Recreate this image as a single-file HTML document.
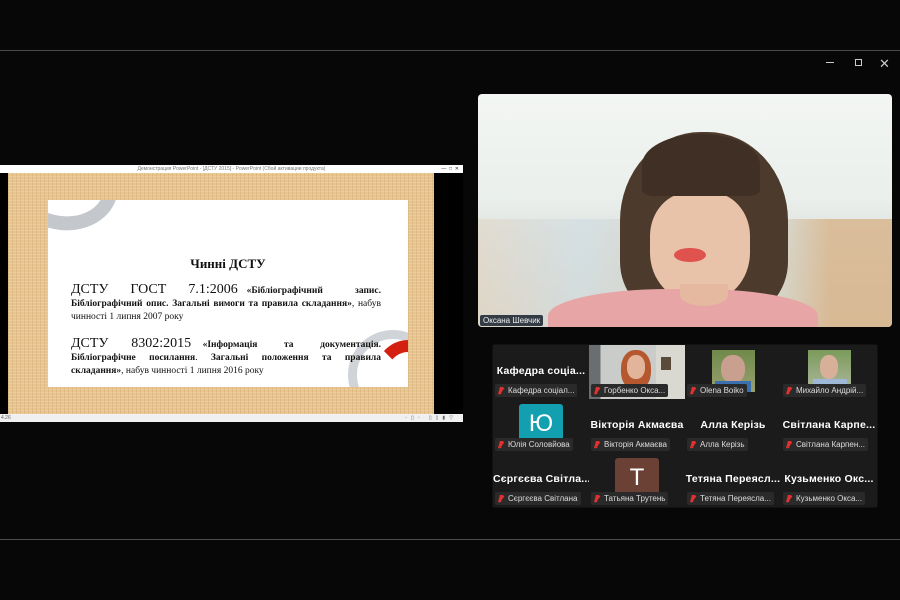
<!DOCTYPE html>
<html><head><meta charset="utf-8"><style>
*{margin:0;padding:0;box-sizing:border-box}
body{width:900px;height:600px;background:#070707;position:relative;overflow:hidden;font-family:"Liberation Sans",sans-serif}
.ab{position:absolute}
.line{position:absolute;left:0;width:900px;height:1px;background:#4a4a4a}
.ser{font-family:"Liberation Serif",serif;color:#111}
.tile{position:absolute;width:96px;height:54px;background:#1b1b1b}
.nm{position:absolute;left:0;right:0;top:20px;text-align:center;color:#fff;font-weight:bold;font-size:10.5px;white-space:nowrap;letter-spacing:.2px}
.chip{position:absolute;left:2px;bottom:2px;height:13px;background:#2a2a2a;border-radius:2px;color:#ddd;font-size:8px;line-height:13px;padding:0 3px 0 13px;white-space:nowrap}
.chip:before{content:"";position:absolute;left:4px;top:3px;width:3px;height:7px;background:#e03030;transform:skewX(-15deg)}
.chip:after{content:"";position:absolute;left:2px;top:6px;width:8px;height:1.5px;background:#e03030;transform:rotate(-55deg)}
</style></head><body>
<div class="line" style="top:50px"></div>
<div class="line" style="top:539px"></div>
<div class="ab" style="left:826px;top:62px;width:8px;height:1px;background:#ccc"></div>
<div class="ab" style="left:855px;top:59px;width:7px;height:7px;border:1px solid #ccc"></div>
<div class="ab" style="left:879px;top:56px;color:#ccc;font-size:13px">✕</div>

<!-- PowerPoint window -->
<div class="ab" style="left:0;top:165px;width:463px;height:257px;background:#000"></div>
<div class="ab" style="left:0;top:165px;width:463px;height:8px;background:#fff;font-size:5px;color:#777;text-align:center;line-height:8px">Демонстрация PowerPoint - [ДСТУ 2015] - PowerPoint (Сбой активации продукта)<span style="position:absolute;right:4px;color:#333">— &nbsp;□ &nbsp;✕</span></div>
<div class="ab" style="left:8px;top:173px;width:426px;height:241px;background:#e8c48e;background-image:repeating-linear-gradient(90deg,rgba(180,130,70,.18) 0 1px,transparent 1px 4px),repeating-linear-gradient(0deg,rgba(255,255,255,.15) 0 1px,transparent 1px 3px)"></div>
<div class="ab" style="left:48px;top:200px;width:360px;height:187px;background:#fff;overflow:hidden">
  <div class="ab" style="left:-40px;top:-60px;width:110px;height:90px;border-radius:50%;border:14px solid #c4c8cc;border-left-color:transparent;border-top-color:transparent;transform:rotate(10deg)"></div>
  <div class="ab" style="left:300px;top:130px;width:90px;height:90px;border-radius:50%;border:9px solid #d0d4d8"></div>
  <div class="ab" style="left:325px;top:140px;width:70px;height:80px;border-radius:50%;border:12px solid #d42010;border-left-color:transparent;border-bottom-color:transparent"></div>
  <div class="ser ab" style="left:0;width:360px;top:56px;text-align:center;font-weight:bold;font-size:13px">Чинні ДСТУ</div>
  <div class="ser ab" style="left:23px;width:310px;top:83px;font-size:9.5px;line-height:13px;text-align:justify"><span style="font-size:14px;word-spacing:18px">ДСТУ ГОСТ 7.1:2006</span> &nbsp; <b>«Бібліографічний &nbsp; &nbsp; &nbsp; &nbsp; &nbsp; запис. Бібліографічний опис. Загальні вимоги та правила складання»</b>, набув чинності 1 липня 2007 року</div>
  <div class="ser ab" style="left:23px;width:310px;top:137px;font-size:9.5px;line-height:13px;text-align:justify"><span style="font-size:14px;word-spacing:18px">ДСТУ 8302:2015</span> &nbsp; <b>«Інформація &nbsp; &nbsp; &nbsp; та &nbsp; &nbsp; &nbsp; документація. Бібліографічне посилання</b>. <b>Загальні положення та правила складання»</b>, набув чинності 1 липня 2016 року</div>
</div>
<div class="ab" style="left:0;top:414px;width:463px;height:8px;background:#f0f0f0;font-size:5px;color:#666;line-height:8px;padding-left:1px">4.26<span style="position:absolute;right:6px;letter-spacing:4px">◦▯◦ ▯▯▮▽</span></div>

<!-- Main video -->
<div class="ab" style="left:478px;top:94px;width:414px;height:233px;border-radius:4px;overflow:hidden;background:linear-gradient(180deg,#f3f6f3 0%,#eaefec 45%,#e0e4e0 60%,#dcd8cc 100%)">
  <div class="ab" style="left:0;top:125px;width:414px;height:110px;background:linear-gradient(90deg,rgba(225,210,190,.5),rgba(205,220,228,.6) 25%,rgba(215,200,175,.5) 50%,rgba(205,218,212,.5) 70%,rgba(215,175,130,.75) 85%,rgba(215,175,130,.75))"></div>
  <div class="ab" style="left:142px;top:38px;width:168px;height:185px;border-radius:48% 48% 30% 30%;background:#4c3a2c"></div>
  <div class="ab" style="left:172px;top:98px;width:100px;height:110px;border-radius:40% 40% 45% 45%;background:#e8c3aa"></div>
  <div class="ab" style="left:164px;top:40px;width:118px;height:62px;border-radius:50% 50% 10% 10%;background:#3f2f24"></div>
  <div class="ab" style="left:196px;top:154px;width:32px;height:14px;border-radius:50%;background:#e0524e"></div>
  <div class="ab" style="left:70px;top:195px;width:270px;height:60px;border-radius:45% 45% 0 0;background:#e7a5a6"></div>
  <div class="ab" style="left:202px;top:190px;width:48px;height:22px;background:#e4b9a0;border-radius:0 0 50% 50%"></div>
  <div class="ab" style="left:2px;top:221px;height:11px;background:#333c44;color:#eee;font-size:8px;line-height:11px;padding:0 3px;border-radius:2px">Оксана Шевчик</div>
</div>

<!-- Gallery -->
<div class="ab" style="left:492px;top:344px;width:386px;height:164px;background:#111;border-radius:3px"></div>
<div class="tile" style="left:493px;top:345px"><div class="nm">Кафедра соціа...</div><div class="chip">Кафедра соціал...</div></div>
<div class="tile" style="left:589px;top:345px;background:linear-gradient(90deg,#6b6e70 0 12%,#c9ccc8 12% 70%,#d9d9d2 70%)"><div class="ab" style="left:32px;top:5px;width:30px;height:40px;border-radius:45%;background:#b5582f"></div><div class="ab" style="left:38px;top:10px;width:18px;height:24px;border-radius:45%;background:#e2b59a"></div><div class="ab" style="left:72px;top:12px;width:10px;height:13px;background:#5a4a3a"></div><div class="chip">Горбенко Окса...</div></div>
<div class="tile" style="left:685px;top:345px"><div class="ab" style="left:27px;top:5px;width:43px;height:42px;background:linear-gradient(#6e8a4a,#9aa070)"></div><div class="ab" style="left:36px;top:10px;width:24px;height:28px;border-radius:45%;background:#c9a090"></div><div class="ab" style="left:30px;top:36px;width:36px;height:11px;background:#3a6fb0"></div><div class="chip">Olena Boiko</div></div>
<div class="tile" style="left:781px;top:345px"><div class="ab" style="left:27px;top:5px;width:43px;height:42px;background:linear-gradient(#7a9a5a,#b0b8a0)"></div><div class="ab" style="left:39px;top:10px;width:18px;height:24px;border-radius:45%;background:#d8b09a"></div><div class="ab" style="left:32px;top:34px;width:34px;height:13px;background:#a0b8d8"></div><div class="chip">Михайло Андрій...</div></div>

<div class="tile" style="left:493px;top:399px"><div class="ab" style="left:26px;top:5px;width:44px;height:42px;background:#12a0b0;border-radius:3px;color:#fff;font-size:24px;text-align:center;line-height:40px">Ю</div><div class="chip">Юлія Соловйова</div></div>
<div class="tile" style="left:589px;top:399px"><div class="nm">Вікторія Акмаєва</div><div class="chip">Вікторія Акмаєва</div></div>
<div class="tile" style="left:685px;top:399px"><div class="nm">Алла Керізь</div><div class="chip">Алла Керізь</div></div>
<div class="tile" style="left:781px;top:399px"><div class="nm">Світлана Карпе...</div><div class="chip">Світлана Карпен...</div></div>

<div class="tile" style="left:493px;top:453px"><div class="nm">Сєргєєва Світла...</div><div class="chip">Сєргєєва Світлана</div></div>
<div class="tile" style="left:589px;top:453px"><div class="ab" style="left:26px;top:5px;width:44px;height:42px;background:#6b4136;border-radius:3px;color:#fff;font-size:24px;text-align:center;line-height:40px">Т</div><div class="chip">Татьяна Трутень</div></div>
<div class="tile" style="left:685px;top:453px"><div class="nm">Тетяна Переясл...</div><div class="chip">Тетяна Переясла...</div></div>
<div class="tile" style="left:781px;top:453px"><div class="nm">Кузьменко Окс...</div><div class="chip">Кузьменко Окса...</div></div>
</body></html>
